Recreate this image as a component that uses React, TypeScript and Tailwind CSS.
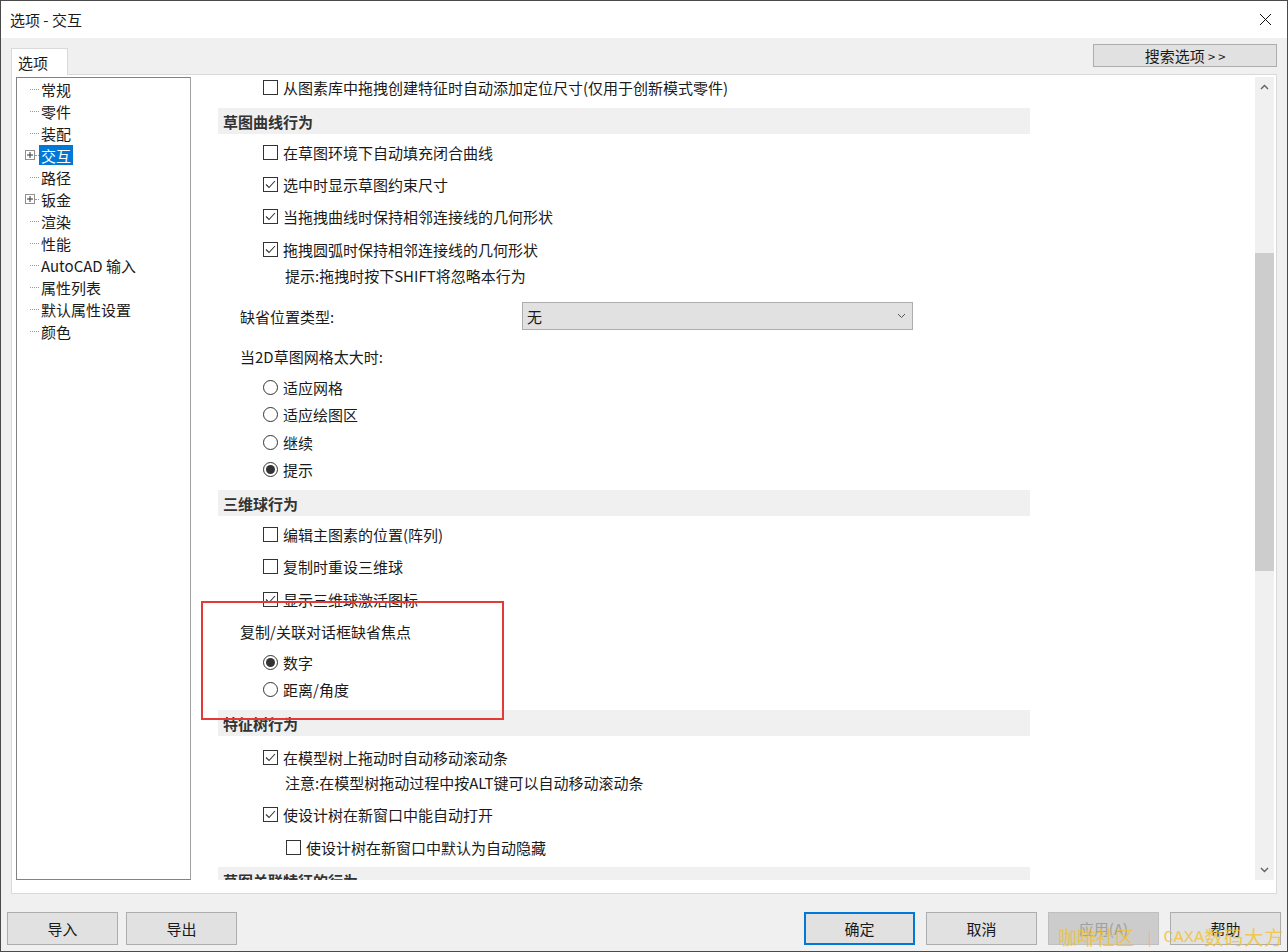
import React from "react";

function Check({ checked }: { checked?: boolean }) {
  return (
    <span className="w-[15px] h-[15px] border border-[#333] bg-white shrink-0 flex items-center justify-center">
      {checked && (
        <svg width="13" height="13" viewBox="0 0 13 13">
          <polyline points="2,6.5 5,9.5 11,3" fill="none" stroke="#333" strokeWidth="1.1" />
        </svg>
      )}
    </span>
  );
}

function Radio({ on }: { on?: boolean }) {
  return (
    <span className="w-[15px] h-[15px] rounded-full border border-[#333] bg-white shrink-0 flex items-center justify-center">
      {on && <span className="w-[9px] h-[9px] rounded-full bg-[#333]" />}
    </span>
  );
}

function CheckRow({ text, checked, className }: { text: string; checked?: boolean; className: string }) {
  return (
    <div className={`flex items-center gap-[5px] shrink-0 ${className}`}>
      <Check checked={checked} />
      <span className="leading-none">{text}</span>
    </div>
  );
}

function RadioRow({ text, on, className }: { text: string; on?: boolean; className: string }) {
  return (
    <div className={`flex items-center gap-[5px] pl-[72px] shrink-0 ${className}`}>
      <Radio on={on} />
      <span className="leading-none">{text}</span>
    </div>
  );
}

function Header({ text, className }: { text: string; className: string }) {
  return (
    <div className={`ml-[27px] w-[812px] h-[26px] shrink-0 bg-[#f0f0f0] flex items-center px-[5px] font-semibold text-[#333] ${className}`}>
      <span className="leading-none">{text}</span>
    </div>
  );
}

function Btn({ label, primary, disabled }: { label: string; primary?: boolean; disabled?: boolean }) {
  return (
    <div
      className={`w-[111px] h-[33px] flex items-center justify-center ${
        primary
          ? "border-2 border-[#0078d7] bg-[#e1e1e1]"
          : disabled
          ? "border border-[#bfbfbf] bg-[#cccccc] text-[#a0a0a0]"
          : "border border-[#adadad] bg-[#e1e1e1]"
      }`}
    >
      <span className="leading-none">{label}</span>
    </div>
  );
}

const tree = [
  { t: "常规" },
  { t: "零件" },
  { t: "装配" },
  { t: "交互", plus: true, sel: true },
  { t: "路径" },
  { t: "钣金", plus: true },
  { t: "渲染" },
  { t: "性能" },
  { t: "AutoCAD 输入" },
  { t: "属性列表" },
  { t: "默认属性设置" },
  { t: "颜色" },
];

export default function App() {
  return (
    <div className="relative w-[1288px] h-[952px] border border-[#4a4a4a] bg-[#f0f0f0] flex flex-col overflow-hidden text-[15px] text-[#1a1a1a] font-['Noto_Sans_CJK_SC','Microsoft_YaHei',sans-serif]">
      {/* title bar */}
      <div className="h-[37px] shrink-0 bg-white flex items-center justify-between pl-[9px] pr-[15px]">
        <span className="leading-none">选项 - 交互</span>
        <svg width="13" height="13" viewBox="0 0 13 13">
          <path d="M1 1 L12 12 M12 1 L1 12" stroke="#111" strokeWidth="1" />
        </svg>
      </div>

      {/* tab strip + search */}
      <div className="h-[36px] shrink-0 flex items-end justify-between px-[10px]">
        <div className="relative z-10 -mb-px w-[57px] h-[27px] bg-white border border-b-0 border-[#d9d9d9] flex items-center pl-[6px]">
          <span className="leading-none">选项</span>
        </div>
        <div className="self-start mt-[6px] w-[184px] h-[23px] bg-[#e1e1e1] border border-[#adadad] flex items-center justify-center">
          <span className="leading-none">搜索选项 <span className="text-[13px]">&gt; &gt;</span></span>
        </div>
      </div>

      {/* panel */}
      <div className="mx-[10px] h-[820px] shrink-0 bg-white border border-[#d9d9d9] flex pt-[2px] pl-[4px] pr-[2px] pb-[12px]">
        {/* tree */}
        <div className="w-[175px] h-[803px] shrink-0 border border-[#828282] border-r-[#a0a0a0] bg-white">
          {tree.map((n) => (
            <div key={n.t} className="h-[22px] flex items-center pl-[8px]">
              {n.plus ? (
                <>
                  <span className="w-[10px] h-[10px] border border-[#919191] flex items-center justify-center shrink-0">
                    <svg width="8" height="8" viewBox="0 0 8 8">
                      <path d="M1 4 H7 M4 1 V7" stroke="#333" strokeWidth="1" />
                    </svg>
                  </span>
                  <span className="w-[4px] border-t border-dotted border-[#999]" />
                </>
              ) : (
                <span className="ml-[5px] w-[9px] border-t border-dotted border-[#999]" />
              )}
              <span
                className={`px-[2px] h-[20px] flex items-center ${
                  n.sel ? "bg-[#0078d7] text-white" : ""
                }`}
              >
                <span className="leading-none whitespace-nowrap">{n.t}</span>
              </span>
            </div>
          ))}
        </div>

        {/* content */}
        <div className="relative flex-1 h-[803px] overflow-hidden flex flex-col">
          <CheckRow className="h-[20px] pl-[72px]" text="从图素库中拖拽创建特征时自动添加定位尺寸(仅用于创新模式零件)" />
          <Header className="mt-[11px]" text="草图曲线行为" />
          <CheckRow className="mt-[2px] h-[32px] pl-[72px]" text="在草图环境下自动填充闭合曲线" />
          <CheckRow className="h-[32px] pl-[72px]" checked text="选中时显示草图约束尺寸" />
          <CheckRow className="h-[33px] pl-[72px]" checked text="当拖拽曲线时保持相邻连接线的几何形状" />
          <CheckRow className="h-[32px] pl-[72px]" checked text="拖拽圆弧时保持相邻连接线的几何形状" />
          <div className="h-[20px] shrink-0 flex items-center pl-[94px]">
            <span className="leading-none">提示:拖拽时按下SHIFT将忽略本行为</span>
          </div>
          <div className="mt-[17px] h-[28px] shrink-0 flex items-center pl-[49px]">
            <span className="w-[282px] leading-none">缺省位置类型:</span>
            <div className="w-[391px] h-[28px] bg-[#e1e1e1] border border-[#adadad] flex items-center justify-between pl-[4px] pr-[6px]">
              <span className="leading-none">无</span>
              <svg width="9" height="6" viewBox="0 0 9 6">
                <polyline points="1,1 4.5,4.5 8,1" fill="none" stroke="#555" strokeWidth="1" />
              </svg>
            </div>
          </div>
          <div className="mt-[12px] h-[28px] shrink-0 flex items-center pl-[49px]">
            <span className="leading-none">当2D草图网格太大时:</span>
          </div>
          <RadioRow className="mt-[4px] h-[27px]" text="适应网格" />
          <RadioRow className="h-[27px]" text="适应绘图区" />
          <RadioRow className="h-[28px]" text="继续" />
          <RadioRow className="h-[27px]" on text="提示" />
          <Header className="mt-[7px]" text="三维球行为" />
          <CheckRow className="mt-[2px] h-[32px] pl-[72px]" text="编辑主图素的位置(阵列)" />
          <CheckRow className="h-[33px] pl-[72px]" text="复制时重设三维球" />
          <CheckRow className="h-[32px] pl-[72px]" checked text="显示三维球激活图标" />
          <div className="h-[32px] shrink-0 flex items-center pl-[49px]">
            <span className="leading-none">复制/关联对话框缺省焦点</span>
          </div>
          <RadioRow className="mt-[2px] h-[27px]" on text="数字" />
          <RadioRow className="h-[27px]" text="距离/角度" />
          <Header className="mt-[7px]" text="特征树行为" />
          <CheckRow className="mt-[5px] h-[32px] pl-[72px]" checked text="在模型树上拖动时自动移动滚动条" />
          <div className="h-[18px] shrink-0 flex items-center pl-[94px]">
            <span className="leading-none">注意:在模型树拖动过程中按ALT键可以自动移动滚动条</span>
          </div>
          <CheckRow className="mt-[7px] h-[32px] pl-[72px]" checked text="使设计树在新窗口中能自动打开" />
          <CheckRow className="h-[34px] pl-[95px]" text="使设计树在新窗口中默认为自动隐藏" />
          <Header className="mt-[3px]" text="草图关联特征的行为" />

          {/* red annotation box */}
          <div className="absolute left-[10px] top-[524px] w-[303px] h-[119px] border-2 border-[#e53935]" />
        </div>

        {/* scrollbar */}
        <div className="w-[19px] h-[803px] shrink-0 bg-[#f0f0f0] flex flex-col">
          <div className="h-[20px] flex items-center justify-center">
            <svg width="9" height="6" viewBox="0 0 9 6">
              <polyline points="1,5 4.5,1.5 8,5" fill="none" stroke="#606060" strokeWidth="1.4" />
            </svg>
          </div>
          <div className="flex-1">
            <div className="mt-[156px] h-[318px] bg-[#cdcdcd]" />
          </div>
          <div className="h-[20px] flex items-center justify-center">
            <svg width="9" height="6" viewBox="0 0 9 6">
              <polyline points="1,1 4.5,4.5 8,1" fill="none" stroke="#606060" strokeWidth="1.4" />
            </svg>
          </div>
        </div>
      </div>

      {/* bottom buttons */}
      <div className="mt-[18px] flex items-center px-[6px]">
        <div className="flex gap-[8px]">
          <Btn label="导入" />
          <Btn label="导出" />
        </div>
        <div className="ml-auto flex gap-[11px]">
          <Btn label="确定" primary />
          <Btn label="取消" />
          <Btn label="应用(A)" disabled />
          <Btn label="帮助" />
        </div>
      </div>

      {/* watermark */}
      <div className="absolute left-[1057px] top-[926px] flex items-end whitespace-nowrap leading-none text-[#f2c230] opacity-80">
        <span className="text-[19px]">咖啡社区</span>
        <span className="ml-[14px] mr-[12px] text-[17px] font-['Liberation_Serif',serif]">|</span>
        <span className="text-[17px] font-['Liberation_Mono',monospace]">CAXA</span>
        <span className="text-[19px] tracking-[1px]">数码大方</span>
      </div>
    </div>
  );
}
